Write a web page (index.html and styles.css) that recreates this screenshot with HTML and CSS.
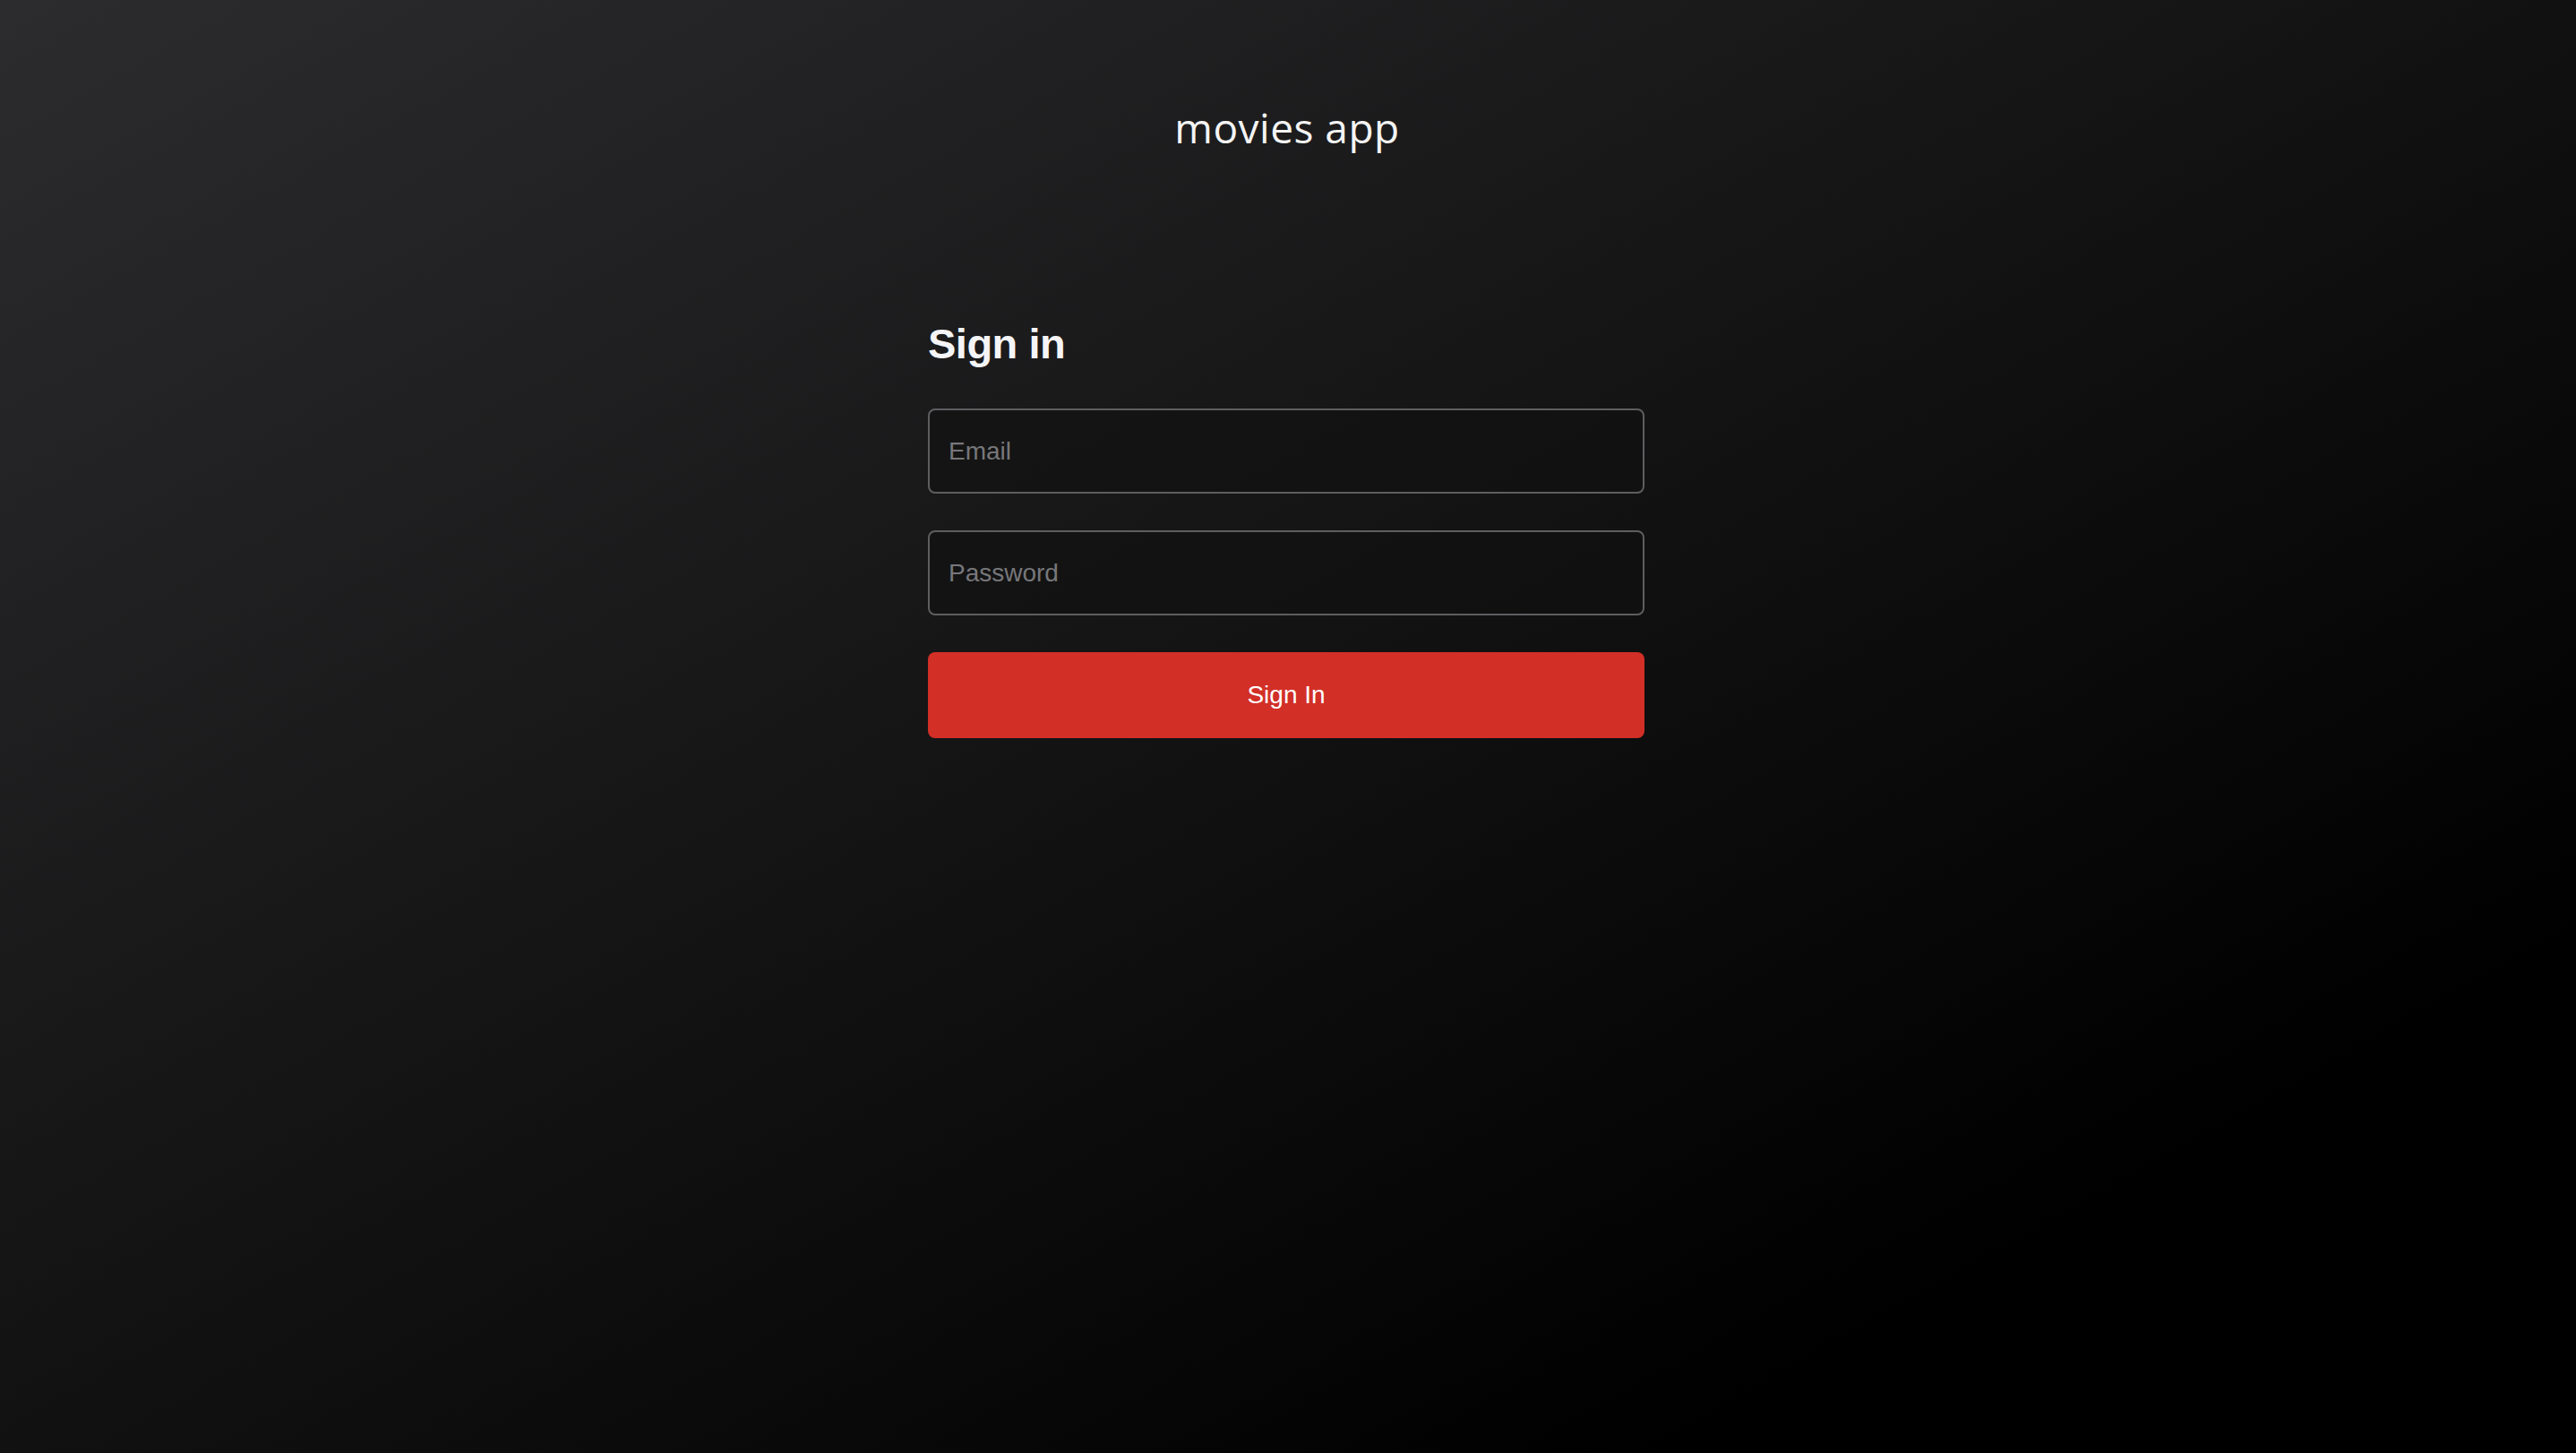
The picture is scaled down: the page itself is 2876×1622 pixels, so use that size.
FILE: index.html
```html
<!DOCTYPE html>
<html lang="en">
<head>
<meta charset="utf-8">
<title>movies app</title>
<link rel="stylesheet" href="styles.css">
</head>
<body>
<div class="page">
  <header class="topbar">
    <div class="brand">movies app</div>
  </header>
  <main class="auth">
    <form class="signin-form">
      <h1 class="signin-title">Sign in</h1>
      <input class="field" type="email" placeholder="Email">
      <input class="field" type="password" placeholder="Password">
      <button class="submit" type="button">Sign In</button>
    </form>
  </main>
</div>
</body>
</html>
```

FILE: styles.css
```css
* { box-sizing: border-box; }

html, body {
  margin: 0;
  padding: 0;
  height: 100%;
}

body {
  background: linear-gradient(to bottom right, #2c2c2e 0%, #141415 45%, #000 82%);
  color: #fff;
  font-family: "Liberation Sans", Arial, sans-serif;
}

.page {
  min-height: 100vh;
  display: flex;
  flex-direction: column;
}

.topbar {
  display: flex;
  justify-content: center;
  padding-top: 119px;
  padding-right: 2px;
}

.brand {
  font-family: "Open Sans", sans-serif;
  font-size: 46px;
  line-height: 46px;
  font-weight: 400;
  color: #f4f4f4;
  letter-spacing: 0.5px;
}

.auth {
  display: flex;
  justify-content: center;
  padding-top: 195px;
  padding-right: 4px;
}

.signin-form {
  width: 800px;
  display: flex;
  flex-direction: column;
  gap: 41px;
}

.signin-title {
  margin: 0 0 8px;
  font-size: 47px;
  line-height: 47px;
  font-weight: 700;
  color: #f5f5f7;
  letter-spacing: -0.5px;
}

.field {
  display: block;
  width: 100%;
  height: 95px;
  margin: 0;
  padding: 0 21px;
  border: 2px solid #5e5e60;
  border-radius: 8px;
  background: rgba(16, 16, 16, 0.6);
  color: #fff;
  font-family: "Liberation Sans", Arial, sans-serif;
  font-size: 28px;
  outline: none;
}

.field::placeholder {
  color: #77777a;
}

.submit {
  display: block;
  width: 100%;
  height: 96px;
  margin: 0;
  border: none;
  border-radius: 8px;
  background: #d22f27;
  color: #fff;
  font-family: "Liberation Sans", Arial, sans-serif;
  font-size: 28px;
  cursor: pointer;
}
```
